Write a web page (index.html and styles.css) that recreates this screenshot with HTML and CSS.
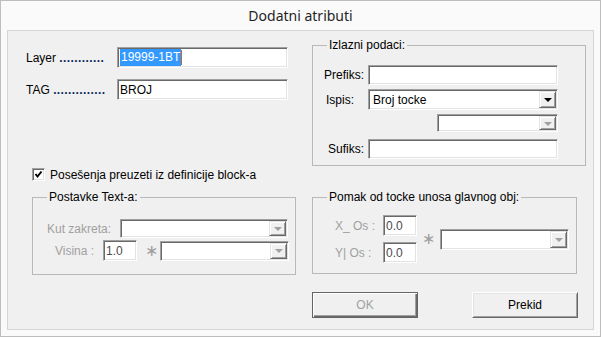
FILE: index.html
```html
<!DOCTYPE html>
<html>
<head>
<meta charset="utf-8">
<link rel="stylesheet" href="styles.css">
</head>
<body>
<div class="window">
  <div class="title">Dodatni atributi</div>
  <div class="panel">
    <div class="top">
      <div class="fields">
        <div class="frow"><span class="flabel">Layer <span class="dots">............</span></span><div class="input"><span class="sel">19999-1BT</span><span class="caret"></span></div></div>
        <div class="frow"><span class="flabel">TAG <span class="dots">..............</span></span><div class="input">BROJ</div></div>
      </div>
      <fieldset class="group g-out">
        <legend>Izlazni podaci:</legend>
        <div class="gbody out-body">
          <div class="orow"><span class="olabel">Prefiks:</span><div class="input o-in"></div></div>
          <div class="orow"><span class="olabel left">Ispis:</span><div class="combo o-combo"><span class="ctext">Broj tocke</span><span class="arrow"><i class="tri"></i></span></div></div>
          <div class="orow"><div class="combo small-combo disabled"><span class="ctext"></span><span class="arrow"><i class="tri"></i></span></div></div>
          <div class="orow"><span class="olabel">Sufiks:</span><div class="input o-in"></div></div>
        </div>
      </fieldset>
    </div>
    <div class="check-row">
      <span class="checkbox"><svg width="9" height="9" viewBox="0 0 9 9"><path d="M1.5 4 L3.5 6.5 L7.5 1.5" fill="none" stroke="#000" stroke-width="2"/></svg></span>
      <span>Posešenja preuzeti iz definicije block-a</span>
    </div>
    <div class="bottom">
      <fieldset class="group g-text">
        <legend>Postavke Text-a:</legend>
        <div class="gbody text-body">
          <div class="trow"><span class="dlabel kut">Kut zakreta:</span><div class="combo kut-combo disabled"><span class="ctext"></span><span class="arrow"><i class="tri"></i></span></div></div>
          <div class="trow"><span class="dlabel vis">Visina :</span><div class="input num">1.0</div><span class="star">∗</span><div class="combo vis-combo disabled"><span class="ctext"></span><span class="arrow"><i class="tri"></i></span></div></div>
        </div>
      </fieldset>
      <fieldset class="group g-off">
        <legend>Pomak od tocke unosa glavnog obj:</legend>
        <div class="gbody off-body">
          <div class="axes">
            <div class="arow"><span class="dlabel ax">X_ Os :</span><div class="input num">0.0</div></div>
            <div class="arow"><span class="dlabel ax">Y| Os :</span><div class="input num">0.0</div></div>
          </div>
          <span class="star star2">∗</span>
          <div class="combo off-combo disabled"><span class="ctext"></span><span class="arrow"><i class="tri"></i></span></div>
        </div>
      </fieldset>
    </div>
    <div class="buttons">
      <div class="btn btn-ok">OK</div>
      <div class="btn btn-cancel">Prekid</div>
    </div>
  </div>
</div>
</body>
</html>
```
FILE: styles.css
```css
html, body { margin: 0; padding: 0; }
body {
  font-family: "Liberation Sans", Arial, sans-serif;
  font-size: 12px;
  color: #000;
  background: #fff;
}
.window {
  width: 601px;
  height: 337px;
  box-sizing: border-box;
  border: 1px solid #bdbdbd;
  background: #fafafa;
  display: flex;
  flex-direction: column;
}
.title {
  height: 29px;
  line-height: 30px;
  text-align: center;
  font-family: "Noto Sans", "Open Sans", sans-serif;
  font-size: 14px;
  color: #1f1f1f;
}
.panel {
  margin: 0 6px 6px 6px;
  border: 1px solid #d5d5d5;
  background: #f0f0f0;
  height: 300px;
  box-sizing: border-box;
}
.top {
  display: flex;
  align-items: flex-start;
  margin-top: 7px;
}
.fields {
  margin-left: 18px;
  margin-top: 9px;
  width: 262px;
  display: flex;
  flex-direction: column;
  gap: 11px;
}
.frow { display: flex; align-items: center; height: 21px; }
.flabel { width: 91px; white-space: nowrap; }
.dots { letter-spacing: 0.4px; font-weight: bold; color: #0d2a5a; }
.input {
  box-sizing: border-box;
  height: 21px;
  background: #fff;
  border-top: 1px solid #a0a0a0;
  border-left: 1px solid #a0a0a0;
  border-bottom: 1px solid #fff;
  border-right: 1px solid #fff;
  box-shadow: inset 1px 1px 0 #696969, inset -1px -1px 0 #e3e3e3;
  padding: 0 2px;
  display: flex;
  align-items: center;
  white-space: nowrap;
}
.frow .input { width: 171px; }
.sel { background: #3399ff; color: #fff; padding: 1px 1px; line-height: 15px; }
.caret { display: inline-block; width: 1px; height: 15px; background: #c8642a; }
.group {
  margin: 0;
  padding: 0;
  border: 1px solid #b8b8b8;
  min-width: 0;
  box-sizing: border-box;
}
.group legend {
  padding: 0 2px;
  margin-left: 14px;
  line-height: 15px;
  font-size: 12px;
  color: #000;
}
.g-out { margin-left: 24px; width: 274px; }
.out-body {
  padding: 12px 0 6px 0;
  display: flex;
  flex-direction: column;
  gap: 4px;
}
.orow { display: flex; align-items: center; }
.olabel { width: 53px; text-align: right; padding-right: 2px; box-sizing: border-box; }
.olabel.left { text-align: left; padding-left: 13px; }
.o-in { width: 190px; height: 20px; margin-left: 2px; }
.combo {
  box-sizing: border-box;
  height: 21px;
  background: #fff;
  border-top: 1px solid #a0a0a0;
  border-left: 1px solid #a0a0a0;
  border-bottom: 1px solid #fff;
  border-right: 1px solid #fff;
  box-shadow: inset 1px 1px 0 #696969, inset -1px -1px 0 #e3e3e3;
  display: flex;
  align-items: stretch;
  padding: 1px;
}
.ctext { flex: 1; display: flex; align-items: center; padding-left: 3px; white-space: nowrap; }
.arrow {
  width: 17px;
  box-sizing: border-box;
  background: #f0f0f0;
  border-top: 1px solid #e3e3e3;
  border-left: 1px solid #e3e3e3;
  border-bottom: 1px solid #696969;
  border-right: 1px solid #696969;
  box-shadow: inset 1px 1px 0 #fff, inset -1px -1px 0 #a0a0a0;
  display: flex;
  align-items: center;
  justify-content: center;
}
.tri {
  display: block;
  width: 0;
  height: 0;
  border-left: 4px solid transparent;
  border-right: 4px solid transparent;
  border-top: 4px solid #000;
  margin-top: 1px;
}
.disabled .tri { border-top-color: #a0a0a0; }
.o-combo { width: 190px; margin-left: 2px; }
.small-combo { width: 121px; height: 18px; margin-left: 124px; margin-top: 0; margin-bottom: 3px; }
.check-row {
  display: flex;
  align-items: center;
  gap: 5px;
  margin-top: 1px;
  margin-left: 24px;
  height: 15px;
}
.checkbox {
  width: 13px;
  height: 13px;
  box-sizing: border-box;
  background: #fff;
  border-top: 1px solid #a0a0a0;
  border-left: 1px solid #a0a0a0;
  border-bottom: 1px solid #fff;
  border-right: 1px solid #fff;
  box-shadow: inset 1px 1px 0 #696969, inset -1px -1px 0 #e3e3e3;
  display: flex;
  align-items: center;
  justify-content: center;
}
.bottom {
  display: flex;
  align-items: flex-start;
  margin-top: 8px;
}
.g-text { margin-left: 24px; width: 264px; height: 85px; }
.g-off { margin-left: 16px; width: 265px; height: 84px; }
.text-body {
  padding: 14px 0 0 14px;
  display: flex;
  flex-direction: column;
  gap: 2px;
}
.trow { display: flex; align-items: center; }
.dlabel { color: #a0a0a0; white-space: nowrap; }
.kut { width: 73px; }
.kut-combo { width: 168px; height: 19px; }
.vis { width: 48px; margin-left: 8px; }
.num { width: 34px; height: 21px; color: #4a4a4a; padding-left: 2px; }
.star { color: #a0a0a0; font-family: "DejaVu Sans", sans-serif; font-size: 16px; line-height: 16px; margin-left: 8px; width: 15px; }
.vis-combo { width: 129px; height: 20px; }
.off-body {
  padding: 10px 0 0 22px;
  display: flex;
  align-items: center;
}
.axes { display: flex; flex-direction: column; gap: 6px; }
.arow { display: flex; align-items: center; }
.ax { width: 48px; }
.star2 { margin-left: 5px; width: 18px; }
.off-combo { width: 129px; height: 21px; }
.buttons {
  display: flex;
  margin-top: 17px;
  margin-left: 304px;
  gap: 54px;
}
.btn {
  width: 106px;
  height: 26px;
  box-sizing: border-box;
  display: flex;
  align-items: center;
  justify-content: center;
  background: #f0f0f0;
}
.btn-ok {
  color: #a0a0a0;
  border: 1px solid #646464;
  box-shadow: inset 1px 1px 0 #fff, inset -1px -1px 0 #696969, inset -2px -2px 0 #a0a0a0;
}
.btn-cancel {
  border-top: 1px solid #fff;
  border-left: 1px solid #fff;
  border-bottom: 1px solid #696969;
  border-right: 1px solid #696969;
  box-shadow: inset 1px 1px 0 #e3e3e3, inset -1px -1px 0 #a0a0a0;
}
```
